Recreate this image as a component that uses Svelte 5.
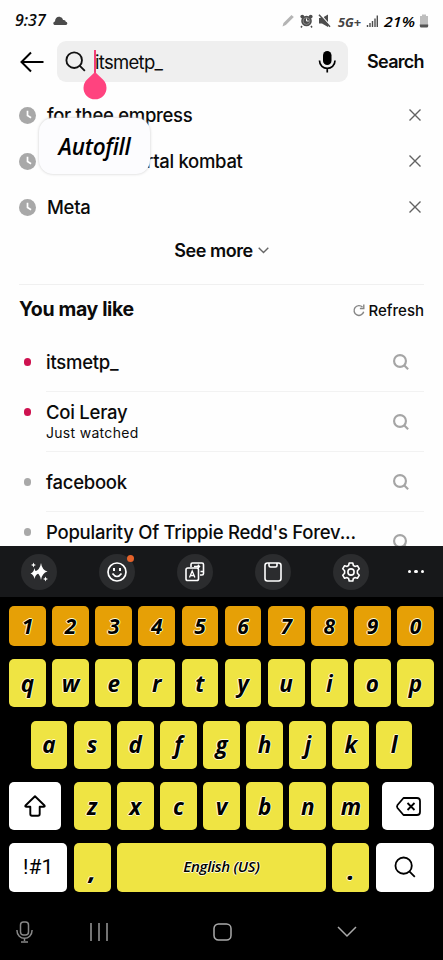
<script>
  const history = ['for thee empress', 'mortal kombat', 'Meta'];
  const suggestions = [
    { text: 'itsmetp_', hot: true },
    { text: 'Coi Leray', note: 'Just watched', hot: true },
    { text: 'facebook' },
    { text: "Popularity Of Trippie Redd's Forev...", note: ' ' }
  ];
  const digits = [...'1234567890'];
  const top = [...'qwertyuiop'];
  const home = [...'asdfghjkl'];
  const bottom = [...'zxcvbnm'];
</script>

{#snippet lens(size, width, color)}
  <svg width={size} height={size} viewBox="0 0 24 24" fill="none" stroke={color} stroke-width={width}>
    <circle cx="10.5" cy="10.5" r="8.9" /><path d="m16.7 16.7 6 6" />
  </svg>
{/snippet}

<div class="screen">
  <div class="status">
    <span class="time">9:37</span>
    <svg class="cloud" width="15" height="10" viewBox="0 0 15 10"><path fill="#4b4b4b" d="M2.3 9C-.2 9-.3 5.900 2 5.400 2 2 5-.2 7.600 1.200 9 1.500 9.700 2.600 10 4c1.700-.4 2.600.5 2.700 1.700 2.200.2 2.200 3.300-.2 3.300Z" /></svg>
    <svg class="tray" width="133" height="20" viewBox="0 0 133 20">
      <path fill="#b4b4b4" d="m.5 15.500 1-3.400 8-8.200 2.300 2-8 8.200Z" />
      <g fill="#4d4d4d">
        <circle cx="24.500" cy="10" r="5.300" /><circle cx="20.300" cy="5.600" r="1.900" /><circle cx="28.700" cy="5.600" r="1.900" />
        <path d="m20 15-1 1.500M29 15l1 1.500" stroke="#4d4d4d" stroke-width="1.500" />
        <path d="M37 7h3l6-3.500v12.500L40 12.500h-3Z" />
      </g>
      <circle cx="24.500" cy="10" r="3.400" fill="none" stroke="#ddd" stroke-width=".4" />
      <path d="M24.500 7.500V10h2.300" fill="none" stroke="#fff" />
      <path d="m38.500 3.500 10 11.500" stroke="#fff" stroke-width="1.300" /><path d="m37 3.800 11 12" stroke="#4d4d4d" stroke-width="1.500" />
      <text x="56" y="16" textLength="23" lengthAdjust="spacingAndGlyphs" class="net">5G+</text>
      <path stroke="#4d4d4d" stroke-width="1.400" d="M85.500 16v-2M88 16v-4M90.500 16v-6M93 16V7.500M95.300 16V4.500" />
      <text x="102" y="15.500" textLength="31" lengthAdjust="spacingAndGlyphs" class="pct">21%</text>
    </svg>
    <svg class="battery" width="10" height="14" viewBox="0 0 10 14"><path fill="#bebebe" d="M1 2h2V.5h4V2h2v11H1Z" /><path fill="#555" d="M.8 10.500h8.400V12q0 1.500-1.500 1.500H2.300Q.8 13.500.8 12Z" /></svg>
  </div>

  <div class="searchbar">
    <svg class="back" width="24" height="22" viewBox="0 0 24 22" fill="none" stroke="#000" stroke-width="2"><path d="M11 1.500 1.500 11l9.500 9.500M1.500 11H23.500" /></svg>
    <div class="field">
      {@render lens(21, 2.1, '#111')}
      <span class="query">itsmetp_</span>
      <i class="caret"></i>
      <svg class="mic" width="18" height="23" viewBox="0 0 18 23"><rect x="5" y="1" width="8.500" height="14" rx="4.250" /><path d="M1.500 10.500C1.500 21 17 21 17 10.500M9.250 18.500v4" fill="none" stroke="#000" stroke-width="1.700" /></svg>
      <svg class="handle" width="24" height="29" viewBox="0 0 24 29"><path fill="#ff437f" d="M12 1 4.100 8.500a11.500 11.500 0 1 0 15.800 0Z" /></svg>
    </div>
    <b class="go">Search</b>
  </div>

  <div class="history">
    {#each history as entry, i}
      <div class="past">
        <svg width="17" height="17" viewBox="0 0 17 17"><circle cx="8.500" cy="8.500" r="8.500" fill="#a8a8a8" /><path d="M8.500 3.800v4.700l3.600 2.300" fill="none" stroke="#fff" stroke-width="1.700" /></svg>
        <span class:inset={i === 1}>{entry}</span>
        <svg class="x" width="12" height="12" viewBox="0 0 12 12"><path d="m.5.5 11 11m0-11-11 11" stroke="#626262" stroke-width="1.400" /></svg>
      </div>
    {/each}
    <div class="autofill">Autofill</div>
  </div>
  <div class="more"><b>See more</b><svg width="11" height="7" viewBox="0 0 11 7"><path d="m.7.700 4.800 4.800 4.800-4.800" fill="none" stroke="#666" stroke-width="1.400" /></svg></div>

  <div class="heading">
    <b>You may like</b>
    <svg width="12" height="13" viewBox="0 0 12 13" fill="none" stroke="#858585" stroke-width="1.400"><path d="M9.500 3.100A4.900 4.900 0 1 0 10.700 7.800M10.800.5v4H6.900" /></svg>
    <span>Refresh</span>
  </div>
  <div class="list">
    {#each suggestions as s}
      <div class="item">
        <i class:hot={s.hot}></i>
        <div class="body">
          <div><div class="title">{s.text}</div>{#if s.note}<div class="note">{s.note}</div>{/if}</div>
          {@render lens(16, 3.2, '#a5a5a5')}
        </div>
      </div>
    {/each}
  </div>

  <div class="keyboard">
    <div class="tools">
      <span class="tool"><svg width="20" height="20" viewBox="0 0 20 20" fill="#fff"><path d="M12 1q1 7 6.500 8.500Q13 11 12 18q-1-7-6.500-8.500Q11 8 12 1ZM5.500 6q.7 4.300 4 5.500-3.300 1.200-4 5.500-.7-4.300-4-5.500 3.300-1.200 4-5.500ZM4.500.5l.7 1.800 1.800.7-1.800.7-.7 1.800-.7-1.800L2 3l1.800-.7ZM16.500 14.500l.7 1.800 1.800.7-1.800.7-.7 1.800-.7-1.800L14 17l1.800-.7Z" /></svg></span>
      <span class="tool"><svg width="20" height="20" viewBox="0 0 20 20" fill="none" stroke="#fff" stroke-width="1.700"><circle cx="10" cy="10" r="9" /><path d="M5.500 11.500q4.500 6 9 0" /><path d="M7 6v3M13 6v3" stroke-width="2" /></svg><em></em></span>
      <span class="tool"><svg width="20" height="20" viewBox="0 0 20 20" fill="none" stroke="#fff" stroke-width="1.600"><path d="M6 5V2.500Q6 1 7.500 1h9.500Q18.500 1 18.500 2.500v9q0 1.500-1.500 1.500h-2" /><rect x="1" y="6" width="12.500" height="12.500" rx="1.800" /><path d="m4.500 15.500 2.700-6.500 2.700 6.500M5.500 13.500h3.500M9 4.500h5.500m-1.700-1.800 1.800 1.800-1.800 1.800M18.500 9.500h-3" stroke-width="1.300" /></svg></span>
      <span class="tool"><svg width="18" height="20" viewBox="0 0 18 20" fill="none" stroke="#fff" stroke-width="1.600"><rect x="1" y="1" width="16" height="18" rx="2.500" /><path d="M5 1v2.500Q5 5 6.500 5h5Q13 5 13 3.500V1" /></svg></span>
      <span class="tool"><svg width="20" height="20" viewBox="0 0 20 20" fill="none" stroke="#fff" stroke-width="1.600" stroke-linejoin="round"><path d="M8.200 1h3.600l.6 2.500 1.500.9L16.400 3.700l1.900 3.100-1.900 1.900v2.600l1.900 1.900-1.900 3.100-2.500-.7-1.500.9-.6 2.500H8.200l-.6-2.500-1.500-.9-2.500.7-1.900-3.100 1.900-1.900V8.700L1.700 6.800l1.900-3.100 2.500.7 1.500-.9Z" /><circle cx="10" cy="10" r="3.100" /></svg></span>
      <span class="dots"><i></i><i></i><i></i></span>
    </div>
    <div class="keys">
      <div class="row nums">{#each digits as k}<div class="key num"><span>{k}</span></div>{/each}</div>
      <div class="row">{#each top as k}<div class="key"><span>{k}</span></div>{/each}</div>
      <div class="row home">{#each home as k}<div class="key"><span>{k}</span></div>{/each}</div>
      <div class="row">
        <div class="key white shift"><svg width="22" height="22" viewBox="0 0 22 22" fill="none" stroke="#000" stroke-width="1.900" stroke-linejoin="round"><path d="M11 1.300 1.500 10.500q-.8 1.300 1 1.300h3.800V19q0 1.700 1.700 1.700h6q1.700 0 1.700-1.700v-7.200h3.800q1.800 0 1-1.300Z" /></svg></div>
        {#each bottom as k}<div class="key"><span>{k}</span></div>{/each}
        <div class="key white erase"><svg width="25" height="19" viewBox="0 0 25 19" fill="none" stroke="#000" stroke-width="1.800" stroke-linejoin="round"><path d="M7.500 1H21q3 0 3 3v11q0 3-3 3H7.500L1.500 11q-1-1.500 0-3Z" /><path d="m11.500 6 7 7m0-7-7 7" /></svg></div>
      </div>
      <div class="row">
        <div class="key white wide sym">!#1</div>
        <div class="key low"><span>,</span></div>
        <div class="key space"><span>English (US)</span></div>
        <div class="key low"><span>.</span></div>
        <div class="key white wide">{@render lens(22, 2, '#000')}</div>
      </div>
    </div>
    <div class="nav">
      <svg width="17" height="22" viewBox="0 0 17 22" fill="none" stroke="#888" stroke-width="1.500"><rect x="4.500" y="1" width="8" height="13" rx="3" /><path d="M.9 9C.9 20 16.100 20 16.100 9M8.500 17v3M5 21h7" /></svg>
      <svg class="recents" width="18" height="18" viewBox="0 0 18 18" stroke="#999" stroke-width="1.500"><path d="M1 0v18M9 0v18M17 0v18" /></svg>
      <svg class="homebtn" width="19" height="18" viewBox="0 0 19 18" fill="none" stroke="#aaa" stroke-width="1.500"><rect x="1" y="1" width="17" height="16" rx="4.500" /></svg>
      <svg class="down" width="20" height="11" viewBox="0 0 20 11" fill="none" stroke="#aaa" stroke-width="1.500"><path d="m1 1 9 9 9-9" /></svg>
    </div>
  </div>
</div>

<style>
  :global(body) { background: #fff; }
  .screen { position: relative; width: 443px; height: 960px; overflow: hidden; background: #fefefe; color: #0b0b0b; font-family: Inter, "Noto Sans", sans-serif; display: flex; flex-direction: column; white-space: nowrap; }
  .screen * { box-sizing: border-box; }
  svg { display: block; flex: none; overflow: visible; }
  .status { height: 41px; flex: none; display: flex; align-items: center; padding: 0 14px 0 15px; }
  .time { font: italic 600 16px "Open Sans", sans-serif; width: 31px; letter-spacing: 0; margin-top: -2px; }
  .cloud { margin-left: 7px; }
  .tray { margin-left: auto; }
  .battery { margin-left: 4px; }
  .net { font: italic 700 12px "Open Sans", sans-serif; fill: #444; }
  .pct { font: italic 600 15px "Open Sans", sans-serif; }
  .searchbar { height: 41px; flex: none; display: flex; align-items: center; padding-left: 20px; }
  .field { position: relative; margin-left: 13px; width: 291px; height: 41px; border-radius: 9px; background: #efefef; display: flex; align-items: center; padding: 0 12px 0 8px; }
  .query { margin-left: 9px; font-size: 18.500px; letter-spacing: -.7px; }
  .caret { position: absolute; left: 37px; top: 9px; width: 2px; height: 24px; background: #f23d77; }
  .mic { margin-left: auto; }
  .handle { position: absolute; left: 26px; top: 30px; z-index: 3; }
  .go { margin-left: 19px; font-size: 18px; font-weight: 600; letter-spacing: -.7px; }
  .history { position: relative; flex: none; height: 138px; margin-top: 10px; padding: 0 22px 0 19px; }
  .past { height: 46.200px; display: flex; align-items: center; font-size: 18.500px; font-weight: 500; }
  .past span { margin-left: 11px; letter-spacing: -.3px; }
  .past span.inset { margin-left: 83px; }
  .past .x { margin-left: auto; }
  .autofill { position: absolute; left: 39px; top: 26px; width: 111px; height: 56px; border-radius: 14px; background: #fcfcfe; box-shadow: 0 0 3px #ccc; display: flex; align-items: center; justify-content: center; font: italic 600 22.500px "Open Sans", sans-serif; letter-spacing: -.3px; color: #000; }
  .more { height: 54px; flex: none; display: flex; align-items: center; justify-content: center; padding-bottom: 13px; gap: 5px; font-size: 18px; letter-spacing: -.45px; }
  .more b { font-weight: 600; }
  .heading { flex: none; margin: 0 19px; height: 48px; border-top: 1px solid #f0f0f0; display: flex; align-items: center; padding-top: 3px; }
  .heading b { font-size: 19.500px; font-weight: 700; letter-spacing: -.35px; margin: -3px auto 0 0; }
  .heading span { font-size: 15px; font-weight: 500; margin-left: 4px; }
  .list { height: 214px; flex: none; overflow: hidden; padding: 0 19px; }
  .item { height: 60px; display: flex; }
  .item > i { width: 7.500px; height: 7.500px; border-radius: 50%; background: #a9a9a9; margin: 26px 15px 0 4.500px; flex: none; }
  .item:nth-child(even) > i { margin-top: 16px; }
  .item > i.hot { background: #ce1250; }
  .body { flex: 1; display: flex; align-items: center; justify-content: space-between; border-bottom: 1px solid #f2f2f2; padding-right: 15px; }
  .title { font-size: 18.500px; font-weight: 500; line-height: 22px; letter-spacing: -.25px; }
  .note { font-size: 14px; line-height: 19px; min-height: 19px; letter-spacing: .3px; }
  .keyboard { flex: none; height: 414px; background: #000; display: flex; flex-direction: column; }
  .tools { height: 51px; background: #17181a; display: flex; align-items: center; padding: 0 19px 0 21px; gap: 42px; }
  .tool { position: relative; width: 36px; height: 36px; border-radius: 50%; background: #2b2c2e; display: grid; place-items: center; flex: none; }
  .tool em { position: absolute; left: 28px; top: 1px; width: 7px; height: 7px; border-radius: 50%; background: #e5622a; }
  .dots { display: flex; gap: 3px; margin-left: -3px; }
  .dots i { width: 3.300px; height: 3.300px; border-radius: 50%; background: #fff; }
  .keys { padding: 9px 9px 0; display: flex; flex-direction: column; gap: 13.200px; }
  .row { height: 48.200px; display: flex; gap: 6.300px; }
  .nums { height: 40px; }
  .home { padding-left: 21.600px; }
  .key { width: 36.830px; flex: none; border-radius: 5px; background: #efe443; color: #000; display: flex; align-items: center; justify-content: center; font: italic 700 22.500px "Open Sans", sans-serif; text-shadow: 1px 0 #fffbd0, -1px 0 #fffbd0, 0 1px #fffbd0, 0 -1px #fffbd0; }
  .num { background: #e6a006; font-size: 21px; }
  .white { background: #fff; }
  .shift { width: 51.500px; margin-right: 6.900px; }
  .erase { width: 51.500px; margin-left: 6.900px; }
  .wide { width: 58.400px; }
  .sym { font: 400 21px Roboto, sans-serif; text-shadow: none; }
  .space { width: 209.300px; font-size: 15px; font-weight: 600; letter-spacing: -.3px; padding-bottom: 2px; }
  .low { padding-top: 8px; font-weight: 800; }
  .nav { flex: 1; display: flex; align-items: center; padding: 12px 0 0 16px; }
  .recents { margin-left: 57px; }
  .homebtn { margin-left: 105px; }
  .down { margin-left: 105px; }
</style>
